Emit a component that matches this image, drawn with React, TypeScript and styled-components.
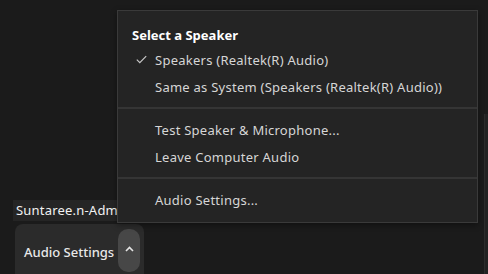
import React from "react";
import styled, { createGlobalStyle } from "styled-components";

const GlobalStyle = createGlobalStyle`
    html, body {
        margin: 0;
        padding: 0;
        background: #1b1b1b;
    }
    body {
        font-family: "Noto Sans", "Open Sans", sans-serif;
        -webkit-font-smoothing: antialiased;
    }
`;

function CheckIcon() {
    return (
        <svg width="11" height="9" viewBox="0 0 11 9" fill="none">
            <path d="M0.8 4.6 L3.8 7.6 L10.2 1.2" stroke="#c8c8c8" strokeWidth="1.2" />
        </svg>
    );
}

function CaretIcon() {
    return (
        <svg width="9" height="6" viewBox="0 0 9 6" fill="none">
            <path d="M1 5 L4.5 1.5 L8 5" stroke="#e6e6e6" strokeWidth="1.6" />
        </svg>
    );
}

function App() {
    return (
        <Page>
            <GlobalStyle />
            <Stage>
                <LeftColumn>
                    <NameTag>Suntaree.n-Admin</NameTag>
                    <ControlBox>
                        <ControlLabel>Audio Settings</ControlLabel>
                        <CaretButton>
                            <CaretIcon />
                        </CaretButton>
                    </ControlBox>
                </LeftColumn>
                <SidePanel />
            </Stage>

            <Menu>
                <MenuTitle>Select a Speaker</MenuTitle>
                <MenuItem>
                    <CheckSlot>
                        <CheckIcon />
                    </CheckSlot>
                    Speakers (Realtek(R) Audio)
                </MenuItem>
                <MenuItem>
                    <CheckSlot />
                    Same as System (Speakers (Realtek(R) Audio))
                </MenuItem>
                <Divider />
                <MenuGroup>
                    <MenuItem>
                        <CheckSlot />
                        Test Speaker &amp; Microphone...
                    </MenuItem>
                    <MenuItem>
                        <CheckSlot />
                        Leave Computer Audio
                    </MenuItem>
                </MenuGroup>
                <Divider />
                <MenuGroup $last>
                    <MenuItem>
                        <CheckSlot />
                        Audio Settings...
                    </MenuItem>
                </MenuGroup>
            </Menu>
        </Page>
    );
}

export default App;

const Page = styled.div`
    position: relative;
    width: 488px;
    height: 274px;
    overflow: hidden;
    background: #1b1b1b;
`;

const Stage = styled.div`
    display: flex;
    height: 100%;
`;

const LeftColumn = styled.div`
    flex: 1;
    display: flex;
    flex-direction: column;
    justify-content: flex-end;
    align-items: flex-start;
    padding-left: 13px;
`;

const SidePanel = styled.div`
    width: 3px;
    margin-top: 114px;
    background: #222222;
    border-left: 1px solid #2c2c2c;
`;

const NameTag = styled.div`
    width: 140px;
    height: 21px;
    padding-left: 3px;
    background: #252525;
    color: #f2f2f2;
    font-size: 13px;
    letter-spacing: 0.2px;
    line-height: 21px;
    white-space: nowrap;
`;

const ControlBox = styled.div`
    display: flex;
    align-items: flex-start;
    gap: 4px;
    width: 129px;
    height: 50px;
    margin-top: 3px;
    margin-left: 2px;
    padding: 5px 4px 0 9px;
    box-sizing: border-box;
    background: #2b2b2b;
    border-radius: 8px 8px 0 0;
`;

const ControlLabel = styled.span`
    margin-top: 14px;
    color: #e8e8e8;
    font-size: 13px;
    font-weight: 500;
    white-space: nowrap;
`;

const CaretButton = styled.div`
    display: flex;
    align-items: center;
    justify-content: center;
    width: 22px;
    height: 43px;
    padding-bottom: 4px;
    box-sizing: border-box;
    background: #474747;
    border-radius: 10px;
`;

const Menu = styled.div`
    position: absolute;
    left: 117px;
    top: 10px;
    width: 361px;
    padding-top: 14px;
    box-sizing: border-box;
    background: #242424;
    border: 1px solid #3a3a3a;
    box-shadow: 0 2px 6px rgba(0, 0, 0, 0.4);
`;

const MenuTitle = styled.div`
    padding: 0 14px 1px;
    color: #ffffff;
    font-size: 13px;
    font-weight: 700;
    line-height: 20px;
`;

const MenuGroup = styled.div<{ $last?: boolean }>`
    display: flex;
    flex-direction: column;
    padding: 7px 0 ${(p) => (p.$last ? "9px" : "0")};
`;

const MenuItem = styled.div`
    display: flex;
    align-items: center;
    height: 27px;
    padding-left: 18px;
    color: #d6d6d6;
    font-size: 13px;
    letter-spacing: 0.25px;
    white-space: nowrap;
`;

const CheckSlot = styled.span`
    display: inline-flex;
    align-items: center;
    width: 19px;
`;

const Divider = styled.div`
    height: 2px;
    margin-top: 7px;
    background: #353535;
`;
